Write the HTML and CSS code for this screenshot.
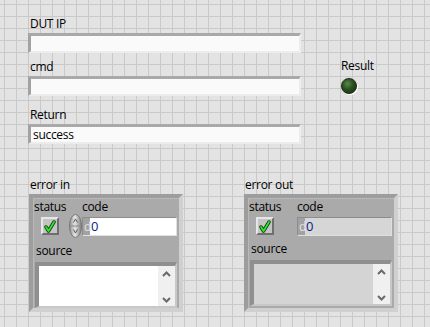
FILE: index.html
```html
<!DOCTYPE html>
<html>
<head>
	<meta charset="UTF-8">
	<meta name="viewport" content="width=device-width, initial-scale=1.0">
	<title>DUT Command</title>
	<link rel="stylesheet" href="styles.css">
</head>
<body>
	<div class="panel">
		<div class="top-row">
			<div class="strings">
				<div class="field">
					<div class="label">DUT IP</div>
					<div class="str-box"></div>
				</div>
				<div class="field">
					<div class="label">cmd</div>
					<div class="str-box"></div>
				</div>
				<div class="field field-return">
					<div class="label">Return</div>
					<div class="str-box">success</div>
				</div>
			</div>
			<div class="result">
				<div class="label">Result</div>
				<div class="led"></div>
			</div>
		</div>

		<div class="clusters">
			<div class="cluster-wrap">
				<div class="label">error in</div>
				<div class="cluster">
					<div class="c-top">
						<div class="status">
							<div class="c-label">status</div>
							<div class="check">
								<svg width="12" height="13" viewBox="0 0 12 13"><path d="M2 7 L4.5 11 L10 2" fill="none" stroke="#0b3a0b" stroke-width="3.4" stroke-linecap="round" stroke-linejoin="round"/><path d="M2 7 L4.5 11 L10 2" fill="none" stroke="#2ee82e" stroke-width="1.8" stroke-linecap="round" stroke-linejoin="round"/></svg>
							</div>
						</div>
						<div class="code">
							<div class="c-label code-label">code</div>
							<div class="code-row">
								<div class="spinner">
									<svg width="13" height="24" viewBox="0 0 13 24"><defs><linearGradient id="sg" x1="0" x2="1"><stop offset="0" stop-color="#8e8e8e"/><stop offset="0.45" stop-color="#e6e6e6"/><stop offset="1" stop-color="#7e7e7e"/></linearGradient></defs><ellipse cx="6.5" cy="12" rx="6" ry="11.5" fill="url(#sg)" stroke="#787878"/><line x1="1" y1="12" x2="12" y2="12" stroke="#8a8a8a"/><path d="M4.5 8.5 L6.5 5 L8.5 8.5" fill="none" stroke="#5a5a5a"/><path d="M4.5 15.5 L6.5 19 L8.5 15.5" fill="none" stroke="#5a5a5a"/></svg>
								</div>
								<div class="num num-ctl"><span class="radix">d</span><span class="num-val">0</span></div>
							</div>
						</div>
					</div>
					<div class="c-label source-label">source</div>
					<div class="text-area">
						<div class="scroll">
							<svg width="9" height="6" viewBox="0 0 9 6"><path d="M1 5 L4.5 1.5 L8 5" fill="none" stroke="#6a6a6a" stroke-width="2"/></svg>
							<svg width="9" height="6" viewBox="0 0 9 6"><path d="M1 1 L4.5 4.5 L8 1" fill="none" stroke="#6a6a6a" stroke-width="2"/></svg>
						</div>
					</div>
				</div>
			</div>

			<div class="cluster-wrap">
				<div class="label">error out</div>
				<div class="cluster">
					<div class="c-top">
						<div class="status">
							<div class="c-label">status</div>
							<div class="check">
								<svg width="12" height="13" viewBox="0 0 12 13"><path d="M2 7 L4.5 11 L10 2" fill="none" stroke="#0b3a0b" stroke-width="3.4" stroke-linecap="round" stroke-linejoin="round"/><path d="M2 7 L4.5 11 L10 2" fill="none" stroke="#2ee82e" stroke-width="1.8" stroke-linecap="round" stroke-linejoin="round"/></svg>
							</div>
						</div>
						<div class="code">
							<div class="c-label code-label">code</div>
							<div class="code-row">
								<div class="spacer"></div>
								<div class="num num-ind"><span class="radix">d</span><span class="num-val">0</span></div>
							</div>
						</div>
					</div>
					<div class="c-label source-label">source</div>
					<div class="text-area text-ind">
						<div class="scroll">
							<svg width="9" height="6" viewBox="0 0 9 6"><path d="M1 5 L4.5 1.5 L8 5" fill="none" stroke="#6a6a6a" stroke-width="2"/></svg>
							<svg width="9" height="6" viewBox="0 0 9 6"><path d="M1 1 L4.5 4.5 L8 1" fill="none" stroke="#6a6a6a" stroke-width="2"/></svg>
						</div>
					</div>
				</div>
			</div>
		</div>
	</div>
</body>
</html>
```

FILE: styles.css
```css
body {
	margin: 0;
	width: 430px;
	height: 327px;
	overflow: hidden;
	font-family: 'Open Sans', 'Liberation Sans', sans-serif;
	font-size: 12px;
	letter-spacing: -0.3px;
	color: #000;
	background-color: #e3e3e3;
	background-image:
		linear-gradient(to right, #c9c9c9 1px, transparent 1px),
		linear-gradient(to bottom, #c9c9c9 1px, transparent 1px);
	background-size: 12px 12px;
	background-position: 4px 4px;
}

.panel {
	padding: 15px 0 0 28px;
}

.top-row {
	display: flex;
}

.strings {
	width: 273px;
}

.label {
	line-height: 18px;
	padding-left: 2px;
}

.field + .field {
	margin-top: 5px;
}

.field-return.field {
	margin-top: 10px;
}

.str-box {
	box-sizing: border-box;
	height: 20px;
	background-color: #fafafa;
	border-style: solid;
	border-width: 3px 2px 2px 3px;
	border-color: #a9a9a9 #ededed #ececec #a2a2a2;
	padding-left: 2px;
	line-height: 15px;
}

.result {
	margin-left: 38px;
	padding-top: 42px;
}

.led {
	width: 16px;
	height: 16px;
	margin: 3px 0 0 2px;
	border-radius: 50%;
	box-sizing: border-box;
	border: 1px solid #1d2b16;
	background: radial-gradient(circle at 40% 35%, #5b8651 0, #28501d 45%, #143009 100%);
	box-shadow: 1px 1px 0 #ffffff, 0 0 1px #888;
}

.clusters {
	display: flex;
	gap: 61px;
	margin-top: 32px;
	margin-left: 1px;
}

.cluster-wrap .label {
	padding-left: 1px;
}

.cluster {
	box-sizing: border-box;
	width: 154px;
	height: 118px;
	background-color: #aaaaaa;
	border-style: solid;
	border-width: 4px;
	border-color: #9d9d9d #d0d0d0 #d0d0d0 #9d9d9d;
	box-shadow: inset 1px 1px 0 #b9b9b9;
}

.c-top {
	display: flex;
}

.c-label {
	line-height: 15px;
}

.status {
	width: 36px;
	padding-top: 1px;
	padding-left: 1px;
	box-sizing: border-box;
}

.check {
	box-sizing: border-box;
	width: 18px;
	height: 18px;
	margin: 3px 0 0 7px;
	background-color: #c4c4c4;
	border: 2px solid;
	border-color: #e6e6e6 #6f6f6f #6f6f6f #e6e6e6;
	display: flex;
	align-items: center;
	justify-content: center;
}

.code {
	padding-top: 1px;
}

.code-label {
	padding-left: 13px;
}

.code-row {
	display: flex;
	align-items: flex-start;
}

.spinner {
	width: 13px;
	height: 24px;
}

.spinner svg {
	display: block;
}

.spacer {
	width: 13px;
}

.num {
	box-sizing: border-box;
	width: 95px;
	height: 19px;
	margin-top: 3px;
	display: flex;
	align-items: stretch;
	border-style: solid;
	border-width: 1px;
	border-color: #8c8c8c #e0e0e0 #e0e0e0 #8c8c8c;
	font-size: 13px;
	line-height: 17px;
}

.num-ctl {
	background-color: #ffffff;
}

.num-ind {
	background-color: #d6d6d6;
}

.radix {
	width: 6px;
	color: #e2e2e2;
	background-color: #a2a2a2;
	padding-left: 1px;
	font-size: 12px;
	letter-spacing: 0;
}

.num-val {
	color: #0a1a8c;
	padding-left: 1px;
}

.source-label {
	margin-top: 5px;
	padding-left: 3px;
}

.text-area {
	box-sizing: border-box;
	width: 142px;
	height: 46px;
	margin: 4px 0 0 2px;
	background-color: #ffffff;
	border-style: solid;
	border-width: 4px 2px 2px 4px;
	border-color: #8f8f8f #c8c8c8 #c8c8c8 #8f8f8f;
	display: flex;
	justify-content: flex-end;
}

.text-ind {
	background-color: #d4d4d4;
}

.scroll {
	width: 17px;
	background-color: #f0f0f0;
	display: flex;
	flex-direction: column;
	align-items: center;
	justify-content: space-between;
	padding: 5px 0 3px;
	box-sizing: border-box;
}

.scroll svg {
	display: block;
}
```
